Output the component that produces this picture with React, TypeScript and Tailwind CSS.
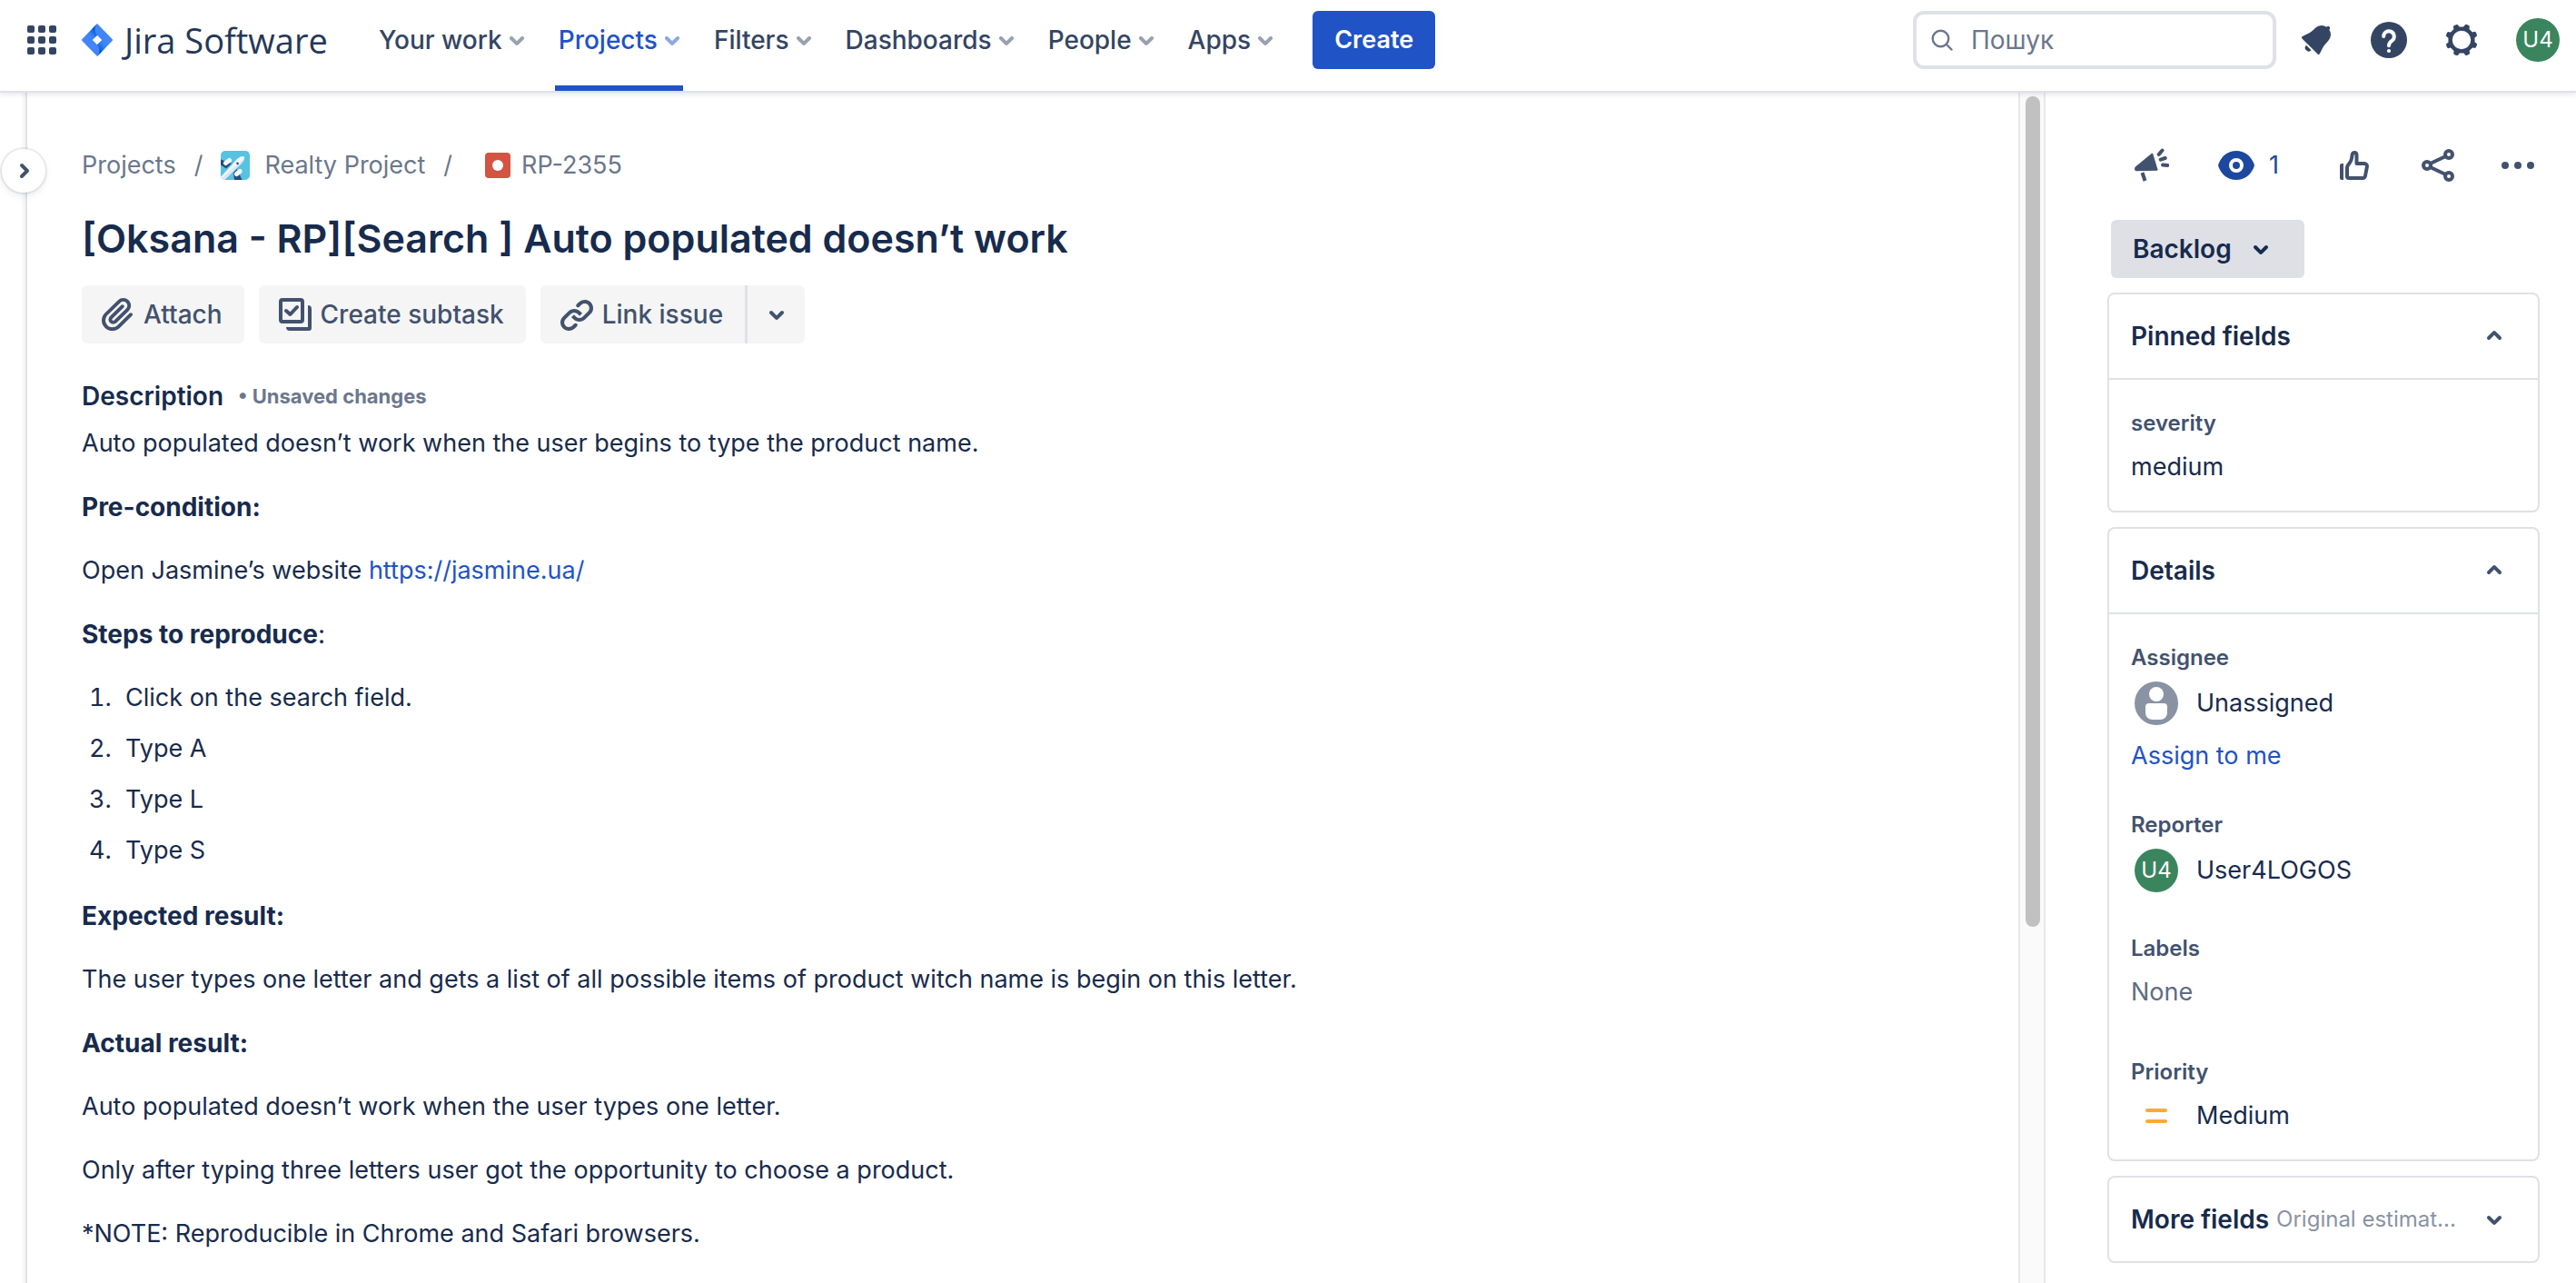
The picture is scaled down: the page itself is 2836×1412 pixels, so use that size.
import React from "react";

function Chevron({ up = false, className = "" }: { up?: boolean; className?: string }) {
  return (
    <svg viewBox="8 8 8 8" className={`h-4 w-4 shrink-0 overflow-visible ${up ? "rotate-180" : ""} ${className}`} fill="currentColor" aria-hidden="true">
      <path d="M8.292 10.293a1.009 1.009 0 000 1.419l2.939 2.965c.218.215.5.322.779.322s.556-.107.769-.322l2.93-2.955a1.01 1.01 0 000-1.419.987.987 0 00-1.406 0l-2.298 2.317-2.307-2.327a.99.99 0 00-1.406 0z" />
    </svg>
  );
}

function AppSwitcherIcon() {
  return (
    <svg viewBox="0 0 32 32" className="h-8 w-8" fill="currentColor" aria-hidden="true">
      {[0, 12, 24].map((y) => [0, 12, 24].map((x) => <rect key={`${x}-${y}`} x={x} y={y} width="8" height="8" rx="2" />))}
    </svg>
  );
}

function JiraMark() {
  return (
    <svg viewBox="0 0 36 36" className="h-9 w-9" aria-hidden="true">
      <defs>
        <linearGradient id="fold" x1="18" y1="7" x2="9" y2="14" gradientUnits="userSpaceOnUse">
          <stop offset="0.15" stopColor="#0052cc" />
          <stop offset="1" stopColor="#2684ff" stopOpacity="0" />
        </linearGradient>
      </defs>
      <path fillRule="evenodd" fill="#4285f7" d="M18 0 34.6 17a1.4 1.4 0 0 1 0 2L18 36 1.4 19a1.4 1.4 0 0 1 0-2L18 0Zm0 12.8L12.8 18 18 23.2 23.2 18 18 12.8Z" />
      <path fill="url(#fold)" d="M18 0c-3.4 3.6-3.4 9.2 0 12.8L12.8 18 6 12.3 18 0Z" />
      <path fill="url(#fold)" transform="rotate(180 18 18)" d="M18 0c-3.4 3.6-3.4 9.2 0 12.8L12.8 18 6 12.3 18 0Z" />
    </svg>
  );
}

function SearchIcon() {
  return (
    <svg viewBox="0 0 24 24" className="h-6 w-6 shrink-0" fill="none" stroke="currentColor" strokeWidth="2.4" strokeLinecap="round" aria-hidden="true">
      <circle cx="10.5" cy="10.5" r="8.8" />
      <path d="m17 17 5.5 5.5" />
    </svg>
  );
}

function BellIcon() {
  return (
    <svg viewBox="0 0 24 24" className="h-12 w-12" fill="currentColor" aria-hidden="true">
      <path d="M6.485 17.669a2 2 0 002.829 0l-2.829-2.83a2 2 0 000 2.83zm4.897-12.191l-.725.725c-.782.782-2.21 1.813-3.206 2.311l-3.017 1.509c-.495.248-.584.774-.187 1.171l8.556 8.556c.398.396.922.313 1.171-.188l1.51-3.016c.494-.988 1.526-2.42 2.311-3.206l.725-.726a5.048 5.048 0 00.64-6.356 1.01 1.01 0 10-1.354-1.494c-.023.025-.046.049-.066.075a5.043 5.043 0 00-2.788-.84 5.036 5.036 0 00-3.57 1.478z" />
    </svg>
  );
}

function HelpIcon() {
  return (
    <svg viewBox="0 0 24 24" className="h-12 w-12" aria-hidden="true">
      <circle cx="12" cy="12" r="10" fill="currentColor" />
      <path d="M9.1 10a2.9 2.9 0 1 1 4.7 2.3C12.6 13.1 12 13.7 12 15.1" fill="none" stroke="#fff" strokeWidth="2" strokeLinecap="round" />
      <circle cx="12" cy="18" r="1.05" fill="#fff" />
    </svg>
  );
}

function GearIcon() {
  return (
    <svg viewBox="-12 -12 24 24" className="h-12 w-12" fill="currentColor" aria-hidden="true">
      <circle r="6.2" fill="none" stroke="currentColor" strokeWidth="2.2" />
      {[22, 67, 112, 157, 202, 247, 292, 337].map((a) => (
        <path key={a} transform={`rotate(${a})`} d="M-2.4-6.6C-1.5-7-1.5-7.4-1.5-8a1 1 0 0 1 1-.9h1a1 1 0 0 1 1 .9c0 .6 0 1 .9 1.4z" />
      ))}
    </svg>
  );
}

function PlaneAvatar() {
  return (
    <svg viewBox="0 0 32 32" className="h-8 w-8" aria-hidden="true">
      <defs>
        <clipPath id="plane-clip"><rect width="32" height="32" rx="5" /></clipPath>
      </defs>
      <g clipPath="url(#plane-clip)">
        <rect width="32" height="32" fill="#57c3e2" />
        <path d="M0 9.5 12 14l-6 5.5L0 15.5Z" fill="#2b4a7c" />
        <path d="m18 20 5.5 12H15l-1-8Z" fill="#2b4a7c" />
        <path d="m5.5 13.500 4-3M17.500 25.500l3.500-3" stroke="#f4f6fb" strokeWidth="5" strokeLinecap="round" />
        <path d="M-2 31 17.500 9.500C20.500 6.500 24 5.300 25.500 6.300c1.200 1.400.2 4.700-2.700 7.700L3 33Z" fill="#f4f6fb" />
        <path d="m3 33 19.800-19c1.800-1.900 2.900-4 3.100-5.500L0 31Z" fill="#dbe4f5" />
        <path d="m17.500 13 2 1.800" stroke="#2b4a7c" strokeWidth="2" />
      </g>
    </svg>
  );
}

function BugIcon() {
  return (
    <svg viewBox="0 0 28 28" className="h-7 w-7" aria-hidden="true">
      <rect width="28" height="28" rx="4" fill="#d35441" />
      <circle cx="14" cy="14" r="6" fill="#fff" />
    </svg>
  );
}

function AttachIcon() {
  return (
    <svg viewBox="0 0 24 24" className="h-12 w-12" fill="currentColor" aria-hidden="true">
      <path d="M11.643 17.965c-1.53 1.495-4.016 1.496-5.542.004a3.773 3.773 0 01.002-5.412l7.147-6.987a2.316 2.316 0 013.233-.003c.893.873.895 2.282.004 3.153l-6.703 6.55a.653.653 0 01-.914-.008.62.62 0 010-.902l6.229-6.087a.941.941 0 000-1.353.995.995 0 00-1.384 0l-6.23 6.087a2.502 2.502 0 000 3.607 2.643 2.643 0 003.683.009l6.703-6.55a4.074 4.074 0 00-.003-5.859 4.306 4.306 0 00-6.002.003l-7.148 6.985a5.655 5.655 0 00-.001 8.118c2.29 2.239 6.015 2.238 8.31-.005l6.686-6.533a.941.941 0 000-1.353.995.995 0 00-1.384 0l-6.686 6.533z" />
    </svg>
  );
}

function SubtaskIcon() {
  return (
    <svg viewBox="-6 -6 48 48" className="h-12 w-12" aria-hidden="true">
      <rect x="2" y="2" width="24" height="24" rx="2" fill="none" stroke="currentColor" strokeWidth="4" />
      <path d="m8 14 4.500 4L20 10" fill="none" stroke="currentColor" strokeWidth="4" strokeLinecap="round" strokeLinejoin="round" />
      <path d="M32 8a4 4 0 0 1 4 4v21a3 3 0 0 1-3 3H12a4 4 0 0 1-4-4h24Z" fill="currentColor" />
    </svg>
  );
}

function LinkIcon() {
  return (
    <svg viewBox="0 0 24 24" className="h-12 w-12" fill="currentColor" aria-hidden="true">
      <path d="M12.856 5.457l-.937.92a1.002 1.002 0 000 1.437 1.047 1.047 0 001.463 0l.984-.966c.967-.95 2.542-1.135 3.602-.288a2.54 2.54 0 01.203 3.81l-2.903 2.852a2.646 2.646 0 01-3.696 0l-1.11-1.09L9 13.57l1.108 1.089c1.822 1.788 4.802 1.788 6.622 0l2.905-2.852a4.558 4.558 0 00-.357-6.82c-1.893-1.517-4.695-1.226-6.422.47" />
      <path d="M11.144 19.543l.937-.92a1.002 1.002 0 000-1.437 1.047 1.047 0 00-1.462 0l-.985.966c-.967.95-2.542 1.135-3.602.288a2.54 2.54 0 01-.203-3.81l2.903-2.852a2.646 2.646 0 013.696 0l1.11 1.09L15 11.43l-1.108-1.089c-1.822-1.788-4.802-1.788-6.622 0l-2.905 2.852a4.558 4.558 0 00.357 6.82c1.893 1.517 4.695 1.226 6.422-.47" />
    </svg>
  );
}

function MegaphoneIcon() {
  return (
    <svg viewBox="0 0 38 38" className="h-[38px] w-[38px]" fill="none" stroke="currentColor" strokeWidth="4" strokeLinecap="round" aria-hidden="true">
      <path d="M18.6 5.9a1 1 0 0 1 1.7.5l5.2 17.2a1 1 0 0 1-1 1.2L2 25.2c-2 0-2.7-3.4-1-4.7Z" fill="currentColor" stroke="none" />
      <path d="m8.500 27 3 9" strokeLinecap="butt" />
      <path d="m26.700 7 3.800-4.500M28.700 12.700l5-1.700M31 18.400l5.300.700" />
    </svg>
  );
}

function EyeIcon() {
  return (
    <svg viewBox="0 0 40 32" className="h-8 w-10" aria-hidden="true">
      <path d="M.6 14C4 5.500 11 0 20 0s16 5.500 19.400 14a5 5 0 0 1 0 4C36 26.500 29 32 20 32S4 26.500.6 18a5 5 0 0 1 0-4Z" fill="currentColor" />
      <circle cx="20" cy="16" r="6" fill="none" stroke="#fff" strokeWidth="4" />
    </svg>
  );
}

function ThumbIcon() {
  return (
    <svg viewBox="0 0 32 32" className="h-8 w-8" fill="none" stroke="currentColor" strokeWidth="4" strokeLinejoin="round" aria-hidden="true">
      <path d="M0 16a2 2 0 0 1 2-2h2v18H2a2 2 0 0 1-2-2Z" fill="currentColor" stroke="none" />
      <path d="M8 18.500V28a2 2 0 0 0 2 2h15a3 3 0 0 0 3-2.500l1.900-10A3 3 0 0 0 27 14h-8.500V5c0-4-4.600-4-5 0-.300 5-1.700 7.500-3.900 9.800C8.500 16 8 17 8 18.500Z" />
    </svg>
  );
}

function ShareIcon() {
  return (
    <svg viewBox="0 0 36 36" className="h-9 w-9" fill="none" stroke="currentColor" strokeWidth="4" aria-hidden="true">
      <circle cx="6" cy="18" r="4" />
      <circle cx="30" cy="6" r="4" />
      <circle cx="30" cy="30" r="4" />
      <path d="m9.500 16 17-8M9.500 20l17 8" />
    </svg>
  );
}

function MoreIcon() {
  return (
    <svg viewBox="0 0 36 8" className="h-2 w-9" fill="currentColor" aria-hidden="true">
      <circle cx="4" cy="4" r="4" />
      <circle cx="18" cy="4" r="4" />
      <circle cx="32" cy="4" r="4" />
    </svg>
  );
}

function UnassignedIcon() {
  return (
    <svg viewBox="0 0 48 48" className="h-12 w-12 shrink-0" aria-hidden="true">
      <circle cx="24" cy="24" r="24" fill="#8993a4" />
      <circle cx="24" cy="14" r="8" fill="#fff" />
      <path d="M12 28a4 4 0 0 1 4-4h16a4 4 0 0 1 4 4v6c0 5-3.500 8-8 8h-8c-4.500 0-8-3-8-8Z" fill="#fff" />
    </svg>
  );
}

function UserAvatar() {
  return (
    <span className="flex h-12 w-12 shrink-0 items-center justify-center rounded-full bg-[#3b855e] text-2xl text-white">U4</span>
  );
}

function NavItem({ label, active = false }: { label: string; active?: boolean }) {
  return (
    <button
      className={`flex h-full items-center gap-2 border-b-[6px] px-1 pb-[6px] text-[28px] font-medium ${active ? "border-b-[#1f53c6] text-[#1f53c6]" : "border-b-transparent text-[#344563]"}`}
    >
      {label}
      <Chevron className="opacity-50" />
    </button>
  );
}

function Header() {
  return (
    <header className="relative z-10 flex h-[102px] shrink-0 items-start border-b-2 border-[#dfe1e6] bg-white pr-[18px] pl-[30px] shadow-[0_3px_4px_#091e4214]">
      <div className="flex h-[88px] items-center">
        <button aria-label="Switch to" className="text-[#344563]"><AppSwitcherIcon /></button>
        <a href="#home" className="ml-[27px] flex items-center gap-3 whitespace-nowrap text-[#253858]">
          <JiraMark />
          <span className="w-[222px] font-['Open_Sans',sans-serif] text-[38px]">Jira Software</span>
        </a>
      </div>
      <nav className="ml-[54px] flex h-full items-center gap-[30px] whitespace-nowrap">
        <NavItem label="Your work" />
        <NavItem label="Projects" active />
        <NavItem label="Filters" />
        <NavItem label="Dashboards" />
        <NavItem label="People" />
        <NavItem label="Apps" />
      </nav>
      <div className="flex h-[88px] flex-1 items-center">
        <button className="ml-10 h-16 rounded-md bg-[#1f53c6] px-6 font-semibold text-white">Create</button>
        <label className="ml-auto flex h-16 w-[400px] items-center gap-5 rounded-xl border-4 border-[#dfe1e6] px-4 text-[28px] text-[#6b778c]">
          <SearchIcon />
          <input type="search" aria-label="Пошук" placeholder="Пошук" className="w-full min-w-0 bg-transparent outline-none placeholder:text-[#6b778c]" />
        </label>
        <div className="ml-5 flex items-center gap-8 text-[#344563]">
          <button aria-label="Notifications"><BellIcon /></button>
          <button aria-label="Help"><HelpIcon /></button>
          <button aria-label="Settings"><GearIcon /></button>
          <button aria-label="Your profile" className="ml-1"><UserAvatar /></button>
        </div>
      </div>
    </header>
  );
}

function Actions() {
  const button = "flex h-16 items-center gap-1 bg-[#f5f5f5] pr-6 pl-4 text-[28px] font-medium";
  return (
    <div className="mt-6 flex gap-4 text-[#42526e]">
      <button className={`${button} rounded-md`}><AttachIcon />Attach</button>
      <button className={`${button} rounded-md`}><SubtaskIcon />Create subtask</button>
      <div className="flex">
        <button className={`${button} rounded-l-md`}><LinkIcon />Link issue</button>
        <button aria-label="More link types" className="flex h-16 w-[66px] items-center justify-center rounded-r-md border-l-3 border-[#dfe1e6] bg-[#f5f5f5]">
          <Chevron />
        </button>
      </div>
    </div>
  );
}

function Issue() {
  return (
    <main className="min-w-0 flex-1 overflow-hidden pt-14 pl-[60px]">
      <nav aria-label="Breadcrumb" className="flex h-12 items-center text-[#6b778c]">
        <a href="#projects">Projects</a>
        <span className="mx-5">/</span>
        <a href="#realty" className="flex items-center gap-4"><PlaneAvatar />Realty Project</a>
        <span className="mr-9 ml-5">/</span>
        <a href="#issue" className="flex items-center gap-3"><BugIcon />RP-2355</a>
      </nav>
      <h1 className="mt-7 text-[43px] leading-[56px] font-semibold">[Oksana - RP][Search ] Auto populated doesn’t work</h1>
      <Actions />
      <div className="mt-[34px] flex h-12 items-center gap-4">
        <h2 className="text-[28px] font-semibold">Description</h2>
        <span className="text-[22px] font-bold text-[#6b778c]">• Unsaved changes</span>
      </div>
      <div className="mt-1 flex flex-col gap-[22px] leading-[48px]">
        <p>Auto populated doesn’t work when the user begins to type the product name.</p>
        <p className="text-[28px] font-bold">Pre-condition:</p>
        <p>Open Jasmine’s website <a href="https://jasmine.ua/" className="text-[#1f53c6]">https://jasmine.ua/</a></p>
        <p className="text-[28px]"><strong>Steps to reproduce</strong>:</p>
        <ol className="mb-0.5 flex list-decimal flex-col gap-2 pl-10">
          <li className="pl-2">Click on the search field.</li>
          <li className="pl-2">Type A</li>
          <li className="pl-2">Type L</li>
          <li className="pl-2">Type S</li>
        </ol>
        <p className="text-[28px] font-bold">Expected result:</p>
        <p>The user types one letter and gets a list of all possible items of product witch name is begin on this letter.</p>
        <p className="text-[28px] font-bold">Actual result:</p>
        <p>Auto populated doesn’t work when the user types one letter.</p>
        <p>Only after typing three letters user got the opportunity to choose a product.</p>
        <p>*NOTE: Reproducible in Chrome and Safari browsers.</p>
      </div>
    </main>
  );
}

function Card({ title, children }: { title: string; children: React.ReactNode }) {
  return (
    <section className="rounded-lg border-2 border-[#dfe1e6]">
      <button aria-expanded="true" className="flex h-[94px] w-full items-center justify-between border-b-2 border-[#dfe1e6] pr-10 pl-6 text-[28px] font-semibold">
        {title}
        <Chevron up className="text-[#42526e]" />
      </button>
      <dl className="flex flex-col px-6">{children}</dl>
    </section>
  );
}

function Label({ children }: { children: React.ReactNode }) {
  return <dt className="text-2xl leading-8 font-semibold text-[#42526e]">{children}</dt>;
}

function Sidebar() {
  return (
    <aside className="w-[584px] shrink-0 overflow-hidden pr-10 pl-[68px]">
      <div className="mt-14 flex h-12 items-center pr-[6px] pl-[30px] text-[#42526e]">
        <button aria-label="Give feedback"><MegaphoneIcon /></button>
        <button aria-label="Watchers" className="ml-[54px] flex items-center gap-4 text-[#1c489f]"><EyeIcon />1</button>
        <button aria-label="Vote" className="mr-[58px] ml-auto"><ThumbIcon /></button>
        <button aria-label="Share" className="mr-[52px]"><ShareIcon /></button>
        <button aria-label="More actions"><MoreIcon /></button>
      </div>
      <button className="mt-9 ml-1 flex h-16 items-center gap-6 rounded-md bg-[#dfe0e6] pr-10 pl-6 text-[28px] font-semibold">
        Backlog
        <Chevron />
      </button>
      <div className="mt-4 flex flex-col gap-4">
        <Card title="Pinned fields">
          <div className="pt-8 pb-6">
            <Label>severity</Label>
            <dd className="mt-2 leading-[48px]">medium</dd>
          </div>
        </Card>
        <Card title="Details">
          <div className="pt-8">
            <Label>Assignee</Label>
            <dd className="mt-[10px]">
              <span className="flex items-center gap-5 pl-1"><UnassignedIcon />Unassigned</span>
              <a href="#assign" className="mt-[10px] block leading-[48px] text-[#1f53c6]">Assign to me</a>
            </dd>
          </div>
          <div className="mt-9">
            <Label>Reporter</Label>
            <dd className="mt-[10px] flex items-center gap-5 pl-1"><UserAvatar />User4LOGOS</dd>
          </div>
          <div className="mt-[46px]">
            <Label>Labels</Label>
            <dd className="mt-2 leading-[48px] text-[#5e6c84]">None</dd>
          </div>
          <div className="mt-12 pb-6">
            <Label>Priority</Label>
            <dd className="mt-2 flex h-12 items-center gap-5 pl-1">
              <svg viewBox="0 0 48 48" className="h-12 w-12" stroke="#f5ac37" strokeWidth="4" strokeLinecap="round" aria-hidden="true">
                <path d="M14 18h20M14 30h20" />
              </svg>
              Medium
            </dd>
          </div>
        </Card>
        <section className="rounded-lg border-2 border-[#dfe1e6]">
          <button aria-expanded="false" className="flex h-[92px] w-full items-center gap-2 pr-10 pl-6 whitespace-nowrap">
            <span className="text-[28px] font-semibold">More fields</span>
            <span className="text-2xl text-[#8993a4]">Original estimat...</span>
            <Chevron className="ml-auto text-[#42526e]" />
          </button>
        </section>
      </div>
    </aside>
  );
}

export default function App() {
  return (
    <div className="flex h-screen flex-col overflow-hidden bg-white font-[Inter,sans-serif] text-[27px] leading-10 text-[#172b4d]">
      <Header />
      <div className="flex min-h-0 flex-1">
        <div className="relative w-[30px] shrink-0 border-r-2 border-[#e2e3e6] bg-linear-to-r from-white from-80% to-[#f4f4f5]">
          <button aria-label="Expand sidebar" className="absolute top-[62px] left-[2px] flex h-12 w-12 items-center justify-center rounded-full bg-white text-[#42526e] shadow-[0_0_0_2px_#091e4214,0_4px_8px_#091e4214]">
            <Chevron className="-rotate-90" />
          </button>
        </div>
        <Issue />
        <div aria-hidden="true" className="w-[30px] shrink-0 border-x-2 border-[#e8e8e8] bg-[#fafafa] px-[6px] pt-1">
          <div className="h-[70%] w-4 rounded-full bg-[#c1c1c1]" />
        </div>
        <Sidebar />
      </div>
    </div>
  );
}
